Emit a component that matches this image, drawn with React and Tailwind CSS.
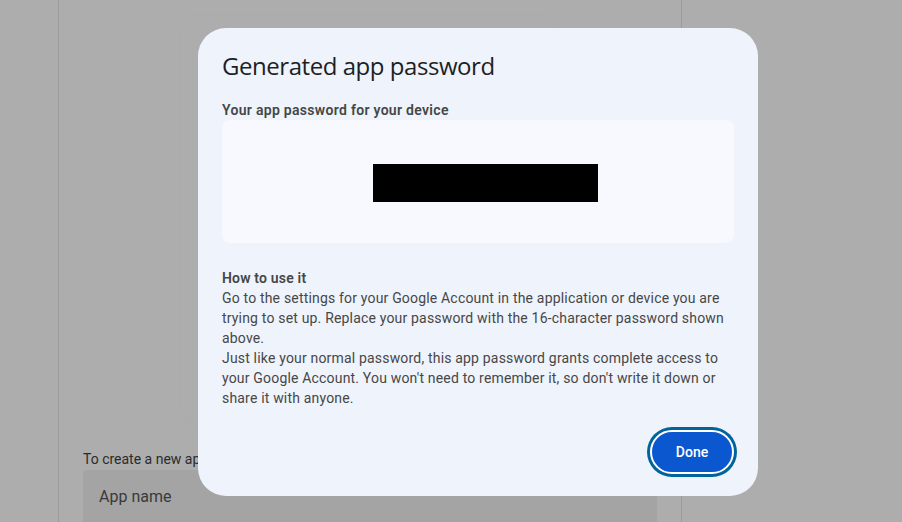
const App = () => {
  return (
    <div className="relative w-[902px] h-[522px] overflow-hidden bg-[#adadad] font-['Roboto',sans-serif]">
      {/* dimmed page behind the dialog */}
      <div className="ml-[58px] w-[624px] h-full border-x border-[#9c9c9c] flex flex-col">
        <div className="shrink-0 mx-[122px] mt-[16px] h-[408px] rounded-[20px] shadow-[0_0_10px_rgba(0,0,0,0.015)]"></div>
        <p className="shrink-0 ml-[24px] mt-[25px] text-[14px] leading-5 text-[#2b2b2b]">
          To create a new app specific password, type a name for it below...
        </p>
        <div className="shrink-0 ml-[24px] mr-[24px] mt-[1px] h-[60px] rounded-t-[4px] bg-[#a4a4a5] px-4 pt-[15px]">
          <span className="text-[16px] text-[#3a3a3a]">App name</span>
        </div>
      </div>

      {/* dialog */}
      <div className="absolute left-[198px] top-[28px] w-[560px] h-[468px] rounded-[28px] bg-[#eef3fc] px-6 pt-[22px] flex flex-col">
        <h2 className="text-[24px] leading-8 text-[#1f1f1f] font-['Open_Sans',sans-serif] tracking-[-0.45px]">
          Generated app password
        </h2>
        <p className="mt-[18px] text-[14px] leading-5 font-semibold tracking-[0.3px] text-[#444746]">
          Your app password for your device
        </p>
        <div className="h-[123px] rounded-[8px] bg-[#f8f9ff] flex items-center justify-center">
          <div className="w-[225px] h-[38px] bg-black ml-[14px] mt-[3px]"></div>
        </div>
        <div className="mt-[25px] text-[14px] leading-5 tracking-[0.18px] text-[#474747]">
          <p className="font-semibold text-[#444746]">How to use it</p>
          <p>
            Go to the settings for your Google Account in the application or device you are
            trying to set up. Replace your password with the 16-character password shown
            above.
          </p>
          <p>
            Just like your normal password, this app password grants complete access to
            your Google Account. You won't need to remember it, so don't write it down or
            share it with anyone.
          </p>
        </div>
        <div className="mt-[22px] flex justify-end">
          <button className="w-[84px] h-[44px] rounded-full border-2 border-white bg-[#0b57d0] text-white text-[14px] font-medium shadow-[0_0_0_3px_#00639b]">
            Done
          </button>
        </div>
      </div>
    </div>
  );
};

export default App;
